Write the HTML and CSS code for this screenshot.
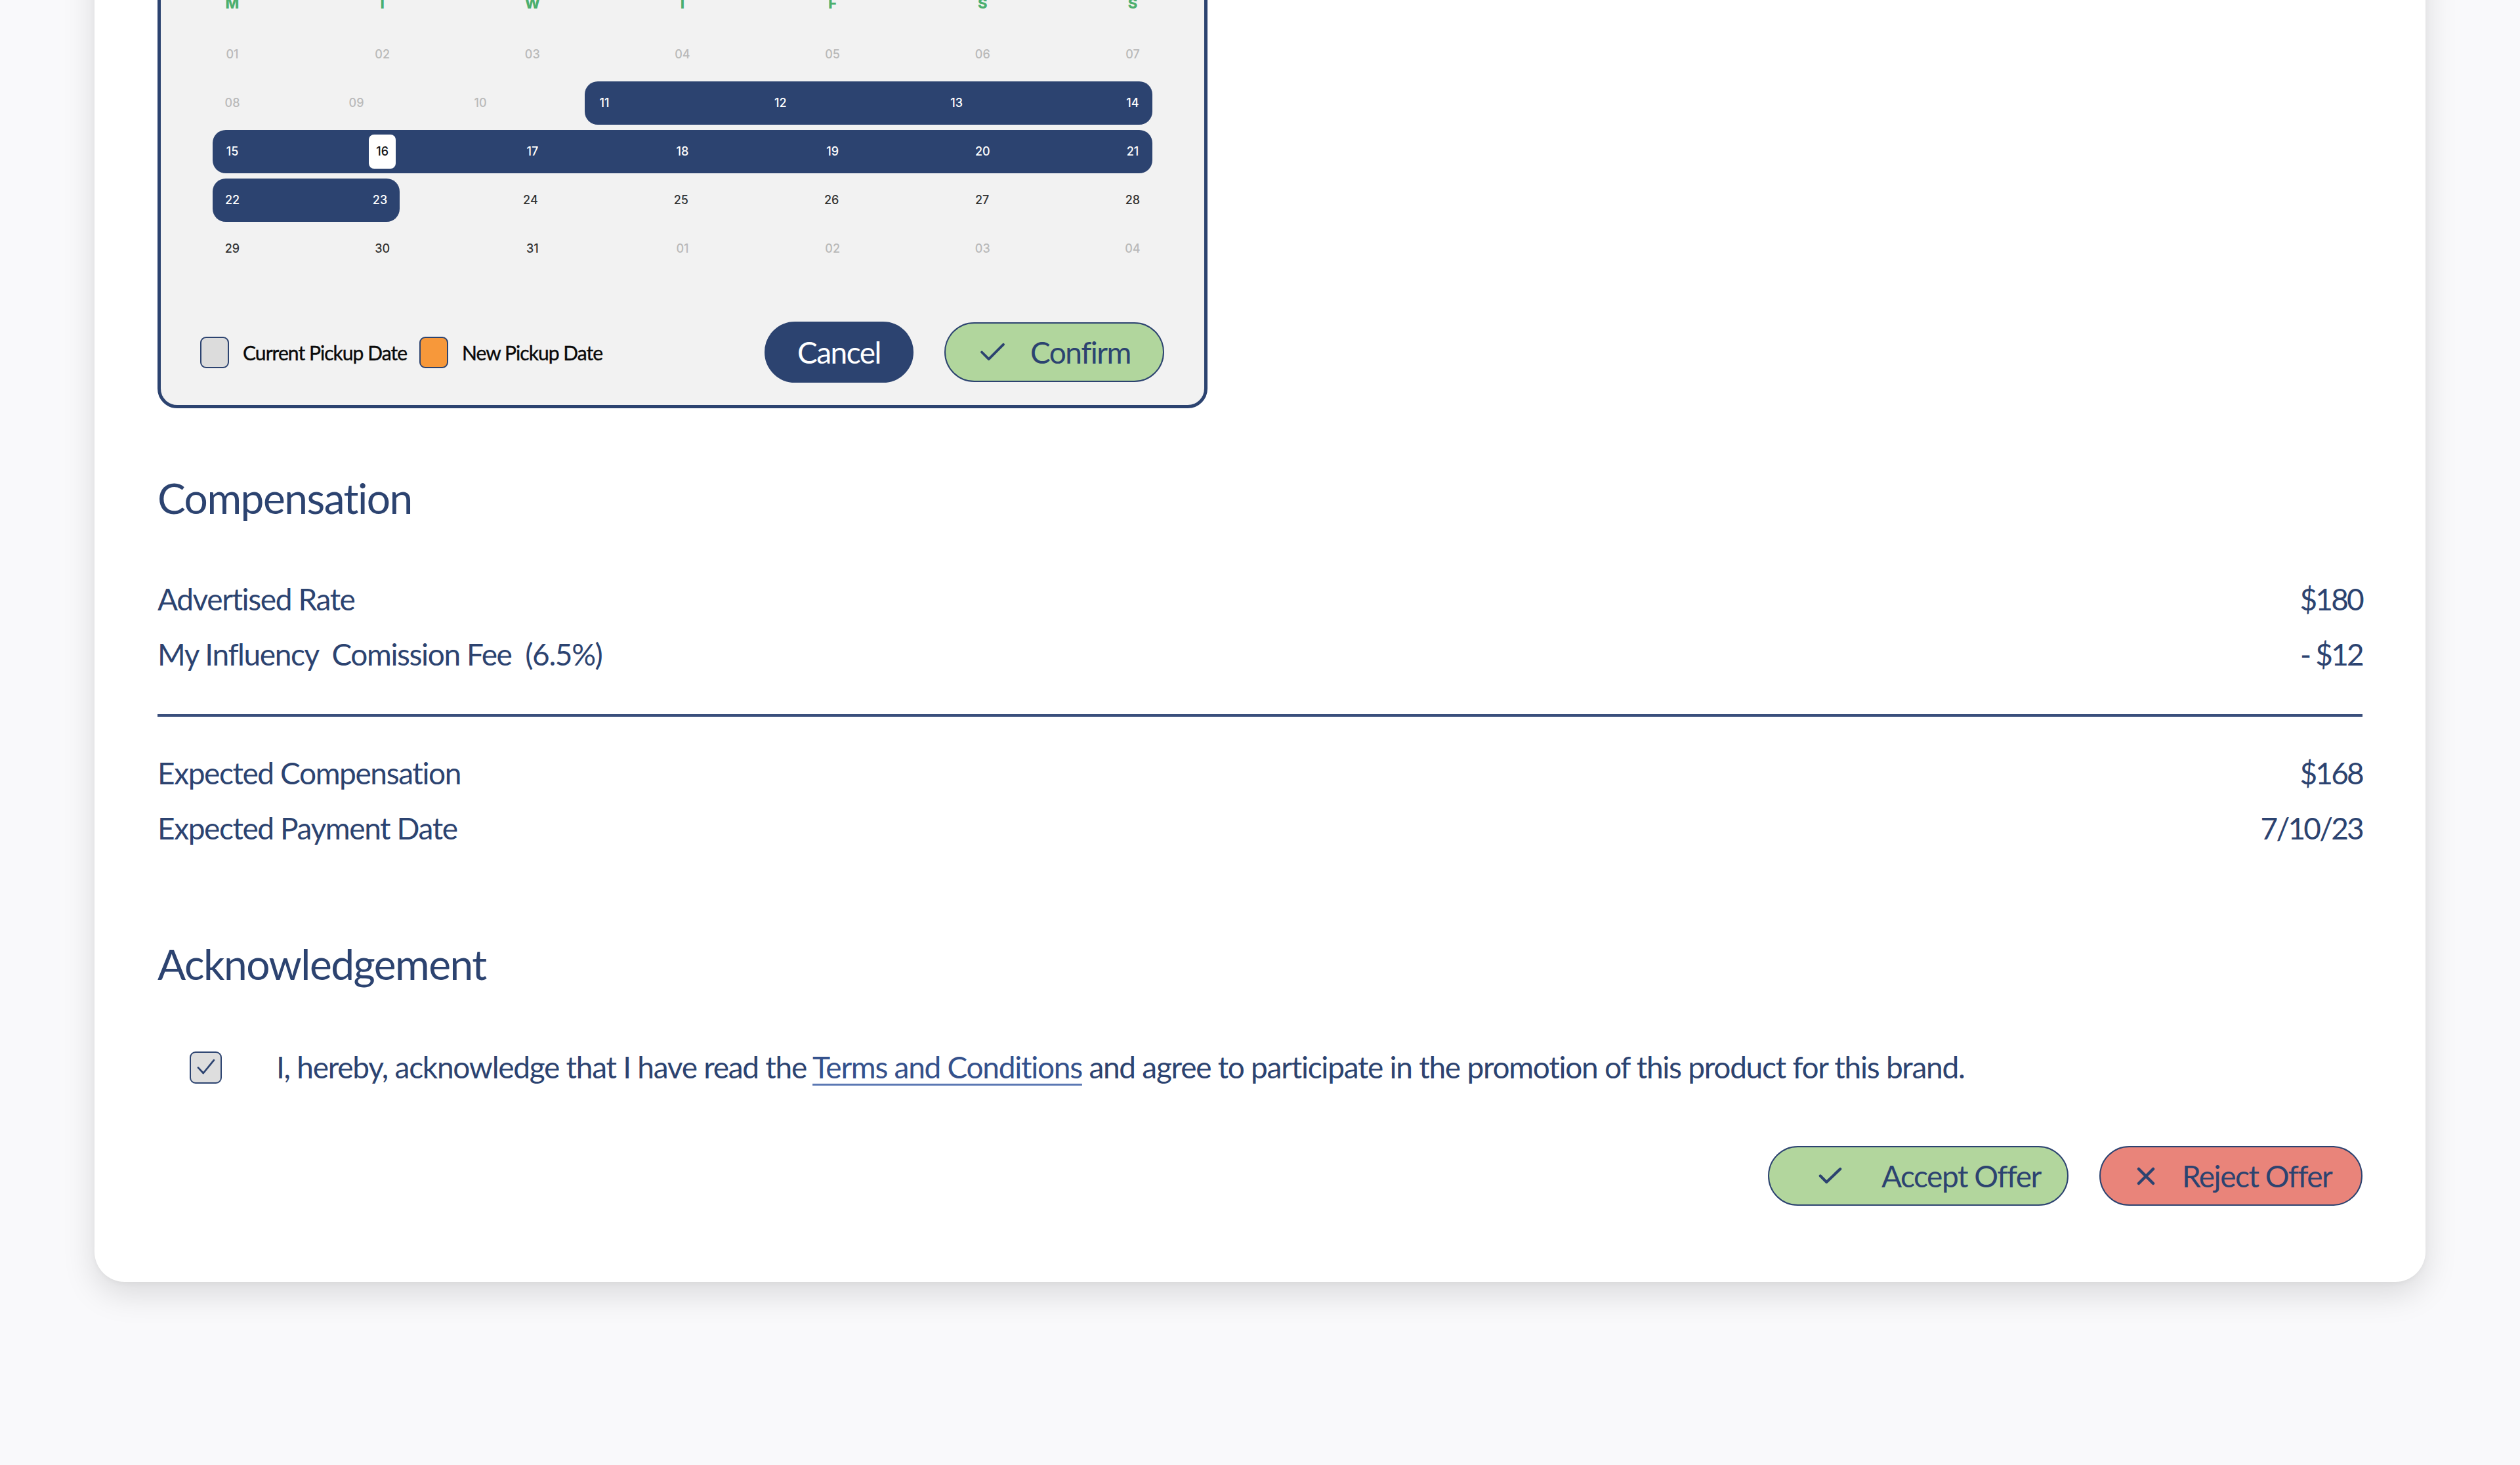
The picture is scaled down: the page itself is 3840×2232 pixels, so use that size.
FILE: index.html
```html
<!DOCTYPE html>
<html lang="en">
<head>
<meta charset="utf-8">
<title>Offer</title>
<link rel="stylesheet" href="styles.css">
</head>
<body>
<div class="page">
  <div class="card">
    <div class="calendar">
      <div class="cal-grid">
        <div class="cal-row head">
          <span class="d">M</span><span class="d">T</span><span class="d">W</span><span class="d">T</span><span class="d">F</span><span class="d">S</span><span class="d">S</span>
        </div>
        <div class="cal-row">
          <span class="d muted">01</span><span class="d muted">02</span><span class="d muted">03</span><span class="d muted">04</span><span class="d muted">05</span><span class="d muted">06</span><span class="d muted">07</span>
        </div>
        <div class="cal-row">
          <span class="d muted">08</span><span class="d muted">09</span><span class="d muted">10</span>
          <div class="range range-end">
            <span class="d">11</span><span class="d">12</span><span class="d">13</span><span class="d">14</span>
          </div>
        </div>
        <div class="cal-row">
          <div class="range range-full">
            <span class="d">15</span><span class="d"><span class="today">16</span></span><span class="d">17</span><span class="d">18</span><span class="d">19</span><span class="d">20</span><span class="d">21</span>
          </div>
        </div>
        <div class="cal-row">
          <div class="range range-start">
            <span class="d">22</span><span class="d">23</span>
          </div>
          <span class="d">24</span><span class="d">25</span><span class="d">26</span><span class="d">27</span><span class="d">28</span>
        </div>
        <div class="cal-row">
          <span class="d">29</span><span class="d">30</span><span class="d">31</span><span class="d muted">01</span><span class="d muted">02</span><span class="d muted">03</span><span class="d muted">04</span>
        </div>
      </div>
      <div class="cal-footer">
        <div class="legend">
          <span class="swatch swatch-current"></span>
          <span class="legend-label">Current Pickup Date</span>
          <span class="swatch swatch-new"></span>
          <span class="legend-label">New Pickup Date</span>
        </div>
        <div class="cal-actions">
          <button class="btn btn-cancel">Cancel</button>
          <button class="btn btn-confirm">
            <svg class="ico-check" viewBox="0 0 40 30" width="39" height="29"><path d="M3 15 L14 26 L37 3" fill="none" stroke="#2c4370" stroke-width="4" stroke-linecap="round" stroke-linejoin="round"/></svg>
            <span>Confirm</span>
          </button>
        </div>
      </div>
    </div>

    <section class="comp">
      <h2 class="section-title">Compensation</h2>
      <div class="line-row"><span>Advertised Rate</span><span class="val">$180</span></div>
      <div class="line-row"><span>My Influency&nbsp; Comission Fee&nbsp; (6.5%)</span><span class="val">- $12</span></div>
      <div class="divider"></div>
      <div class="line-row first-after"><span>Expected Compensation</span><span class="val">$168</span></div>
      <div class="line-row"><span>Expected Payment Date</span><span class="val">7/10/23</span></div>
    </section>

    <section class="ack">
      <h2 class="section-title">Acknowledgement</h2>
      <div class="ack-row">
        <span class="checkbox">
          <svg viewBox="0 0 30 30" width="36" height="36"><path d="M5 15.5 L11.5 22.5 L25 6" fill="none" stroke="#2c4370" stroke-width="2.3" stroke-linecap="round" stroke-linejoin="round"/></svg>
        </span>
        <p class="ack-text">I, hereby, acknowledge that I have read the <a class="link">Terms and Conditions</a> and agree to participate in the promotion of this product for this brand.</p>
      </div>
      <div class="offer-actions">
        <button class="btn btn-accept">
          <svg viewBox="0 0 38 28" width="36" height="27"><path d="M3 14 L13 24 L35 3" fill="none" stroke="#2c4370" stroke-width="4.5" stroke-linecap="round" stroke-linejoin="round"/></svg>
          <span>Accept Offer</span>
        </button>
        <button class="btn btn-reject">
          <svg viewBox="0 0 30 30" width="30" height="30"><path d="M4 4 L26 26 M26 4 L4 26" fill="none" stroke="#2c4370" stroke-width="4.5" stroke-linecap="round"/></svg>
          <span>Reject Offer</span>
        </button>
      </div>
    </section>
  </div>
</div>
</body>
</html>
```

FILE: styles.css
```css
* { box-sizing: border-box; }
html, body { margin: 0; padding: 0; }
body {
  background: #f9f9fb;
  font-family: Lato, "Open Sans", sans-serif;
  color: #2c4370;
  overflow: hidden;
  height: 2232px;
}
.page {
  padding: 0 144px;
}
.card {
  margin-top: -169px;
  background: #ffffff;
  border-radius: 46px;
  box-shadow: 0 18px 50px rgba(0, 0, 0, 0.13), 0 2px 8px rgba(0,0,0,0.04);
  padding: 96px 96px 116px 96px;
}

/* Calendar */
.calendar {
  width: 1600px;
  background: #f2f2f2;
  border: 5px solid #2c4370;
  border-radius: 30px;
  padding: 40px 0 34px 0;
}
.cal-grid {
  margin: 0 79px 0 79px;
  display: flex;
  flex-direction: column;
  gap: 8px;
}
.cal-row {
  height: 66px;
  display: flex;
  justify-content: space-between;
  align-items: center;
}
.cal-row.head { margin-bottom: 4px; }
.d {
  width: 60px;
  flex: none;
  text-align: center;
  font-family: Inter, "Noto Sans", sans-serif;
  font-size: 18px;
  font-weight: 500;
  color: #333333;
  line-height: 24px;
}
.d.muted { color: #b9b9b9; }
.head .d {
  color: #4caf6e;
  font-weight: 800;
  font-size: 22px;
}
.range {
  height: 66px;
  background: #2c4370;
  border-radius: 20px;
  display: flex;
  justify-content: space-between;
  align-items: center;
  flex: none;
}
.range .d { color: #ffffff; }
.range-full { width: 100%; }
.range-end { width: 865px; }
.range-start { width: 285px; }
.today {
  display: inline-block;
  background: #ffffff;
  color: #111111;
  padding: 14px 11px;
  border-radius: 8px;
}

.cal-footer {
  margin-top: 78px;
  padding: 0 61px 0 60px;
  display: flex;
  justify-content: space-between;
  align-items: center;
}
.legend {
  display: flex;
  align-items: center;
}
.swatch {
  width: 44px;
  height: 48px;
  border-radius: 9px;
  border: 2px solid #2c4370;
}
.swatch-current { background: #dcdcdc; }
.swatch-new { background: #f7983a; margin-left: 19px; }
.legend-label {
  margin-left: 21px;
  font-size: 30px;
  letter-spacing: -0.95px;
  color: #0a0a0a;
  -webkit-text-stroke: 0.4px #0a0a0a;
}
.cal-actions {
  display: flex;
  gap: 47px;
  align-items: center;
}

.btn {
  font-family: Lato, "Open Sans", sans-serif;
  font-size: 46px;
  letter-spacing: -1.5px;
  border-radius: 999px;
  border: 2px solid #2c4370;
  display: flex;
  align-items: center;
  color: #2c4370;
  cursor: pointer;
}
.btn-cancel {
  height: 93px;
  width: 227px;
  justify-content: center;
  background: #2c4370;
  color: #ffffff;
}
.btn-confirm {
  height: 91px;
  width: 335px;
  padding: 0 0 0 52px;
  gap: 38px;
  background: #b1d69d;
}

/* Compensation */
.section-title {
  margin: 0;
  font-size: 64px;
  line-height: 80px;
  font-weight: 400;
  letter-spacing: -1.5px;
  color: #2c4370;
}
.comp { margin-top: 97px; }
.comp .section-title { margin-bottom: 72px; }
.line-row {
  display: flex;
  justify-content: space-between;
  font-size: 46px;
  line-height: 84px;
  letter-spacing: -1.4px;
}
.line-row .val { letter-spacing: -2.8px; }
.divider {
  margin-top: 49px;
  height: 4px;
  background: #3a4f7c;
}
.line-row.first-after { margin-top: 44px; }

/* Acknowledgement */
.ack { margin-top: 125px; }
.ack .section-title { margin-bottom: 75px; }
.ack-row {
  display: flex;
  align-items: center;
  height: 84px;
  padding-left: 49px;
}
.checkbox {
  width: 49px;
  height: 49px;
  flex: none;
  background: #dedede;
  border: 2px solid #2c4370;
  border-radius: 9px;
  display: flex;
  align-items: center;
  justify-content: center;
}
.ack-text {
  margin: 0 0 0 83px;
  font-size: 46px;
  letter-spacing: -1.27px;
  line-height: 84px;
  white-space: nowrap;
}
.link {
  color: #34518c;
  text-decoration: underline;
  text-decoration-color: #5b78b3;
  text-decoration-thickness: 3px;
  text-underline-offset: 8px;
}
.offer-actions {
  margin-top: 78px;
  display: flex;
  justify-content: flex-end;
  gap: 47px;
}
.btn-accept {
  height: 91px;
  width: 458px;
  padding: 0 0 0 75px;
  gap: 60px;
  background: #b2d69d;
}
.btn-reject {
  height: 91px;
  width: 401px;
  padding: 0 0 0 54px;
  gap: 40px;
  background: #e9847a;
}
```
